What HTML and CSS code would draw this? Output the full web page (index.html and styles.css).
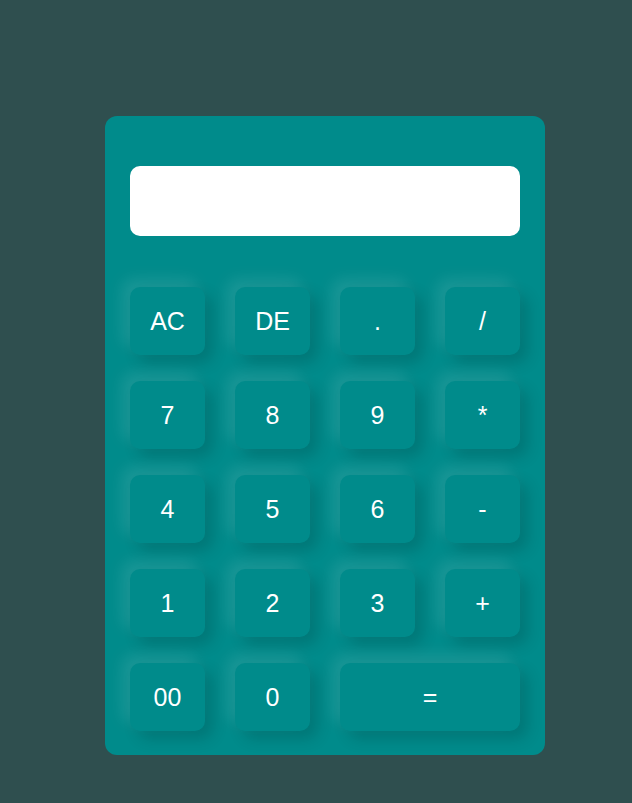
FILE: index.html
```html
<!DOCTYPE html>
<html>
<head>
<meta charset="utf-8">
<link rel="stylesheet" href="styles.css">
</head>
<body>
<div class="page">
  <div class="calculator">
    <div class="display"></div>
    <div class="keys">
      <button class="key">AC</button>
      <button class="key">DE</button>
      <button class="key">.</button>
      <button class="key">/</button>
      <button class="key">7</button>
      <button class="key">8</button>
      <button class="key">9</button>
      <button class="key">*</button>
      <button class="key">4</button>
      <button class="key">5</button>
      <button class="key">6</button>
      <button class="key">-</button>
      <button class="key">1</button>
      <button class="key">2</button>
      <button class="key">3</button>
      <button class="key">+</button>
      <button class="key">00</button>
      <button class="key">0</button>
      <button class="key wide">=</button>
    </div>
  </div>
</div>
</body>
</html>
```

FILE: styles.css
```css
html, body {
  margin: 0;
  padding: 0;
  background: #2f4f4f;
  font-family: "Liberation Sans", Arial, sans-serif;
}
.page {
  height: 803px;
  display: flex;
  justify-content: center;
  padding-top: 116px;
  box-sizing: border-box;
  padding-left: 18px;
}
.calculator {
  width: 440px;
  height: 639px;
  box-sizing: border-box;
  background: #008b8b;
  border-radius: 12px;
  padding: 50px 25px 24px;
}
.display {
  height: 70px;
  background: #ffffff;
  border-radius: 10px;
}
.keys {
  margin-top: 51px;
  display: grid;
  grid-template-columns: repeat(4, 75px);
  grid-auto-rows: 68px;
  column-gap: 30px;
  row-gap: 26px;
}
.key {
  border: none;
  background: #008b8b;
  color: #ffffff;
  font-family: "Liberation Sans", Arial, sans-serif;
  font-size: 25px;
  border-radius: 10px;
  padding: 0;
  box-shadow: -8px -8px 15px rgba(255, 255, 255, 0.1), 8px 8px 15px rgba(0, 0, 0, 0.15);
}
.wide {
  grid-column: span 2;
}
```
